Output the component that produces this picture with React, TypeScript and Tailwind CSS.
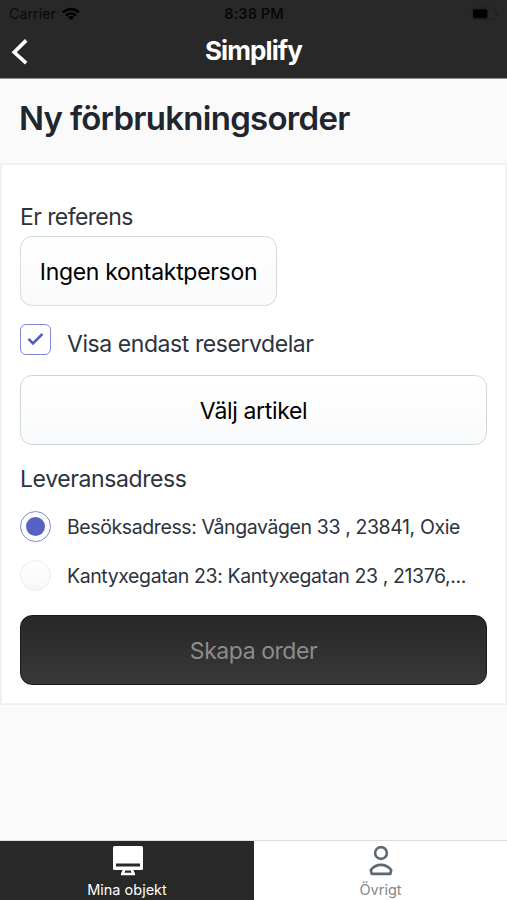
import { useState } from 'react';
import clsx from 'clsx';

const adresser = [
  { id: 'besok', text: 'Besöksadress: Vångavägen 33 , 23841, Oxie' },
  { id: 'kantyx', text: 'Kantyxegatan 23: Kantyxegatan 23 , 21376,...' },
];

function StatusBar() {
  return (
    <div className="flex h-[27px] items-center justify-between pr-[8px] pl-[9px] text-[14.5px] text-black/80">
      <div className="flex w-24 items-center gap-[6px]">
        <span className="tracking-[-0.1px]">Carrier</span>
        <svg width="18" height="14" viewBox="0 0 18 14" fill="none" stroke="#000" strokeWidth="2.7">
          <path d="M1 5.4C5.4 .9 12.6 .9 17 5.4" />
          <path d="M4 8.6c2.9-2.8 7.1-2.8 10 0" />
          <path d="M9 13.2 6 10.3c1.8-1.6 4.2-1.6 6 0z" fill="#000" stroke="none" />
        </svg>
      </div>
      <span className="font-semibold tracking-[0.1px]">8:38 PM</span>
      <div className="flex w-24 justify-end">
        <svg width="28" height="14" viewBox="0 0 28 14" fill="none">
          <rect x="1" y="1" width="24" height="11.5" rx="3" stroke="#202020" />
          <rect x="2" y="2.3" width="14.5" height="9" rx="2" fill="#000" />
          <path d="M26.4 5v4c1.4-.5 1.4-3.5 0-4z" fill="#1c1c1c" />
        </svg>
      </div>
    </div>
  );
}

export default function App() {
  const [reservdelar, setReservdelar] = useState(true);
  const [adress, setAdress] = useState('besok');

  return (
    <div className="flex h-[900px] w-[507px] flex-col overflow-hidden bg-[#fafafa] font-['Inter',sans-serif] text-[#2d333d]">
      <header className="h-[79px] shrink-0 border-b border-[#8a8a8a] bg-[#282828]">
        <StatusBar />
        <div className="flex h-[50px] items-center justify-between px-[11px]">
          <button className="w-10" aria-label="Tillbaka">
            <svg width="18" height="28" viewBox="0 0 18 28" fill="none" stroke="#fff" strokeWidth="3.6">
              <path d="M15.2 2.4 3.2 14.3 15.2 25.2" />
            </svg>
          </button>
          <h1 className="pb-[2px] text-[26px] leading-8 font-bold tracking-[-0.9px] text-white">Simplify</h1>
          <div className="w-10" />
        </div>
      </header>

      <h2 className="mt-[19px] ml-[19px] h-[65px] text-[33px] leading-10 font-semibold tracking-[-0.72px] whitespace-nowrap text-[#20252f]">
        Ny förbrukningsorder
      </h2>

      <main className="flex h-[542px] shrink-0 flex-col border-2 border-[#f1f1f1] bg-white px-[18px] pt-9">
        <p className="text-[23px] leading-8 tracking-[-0.6px]">Er referens</p>
        <button className="mt-[3px] h-[70px] w-[257px] shrink-0 rounded-xl border border-[#d4d9db] bg-linear-to-b from-white to-[#f9fafb] pt-[3px] text-[23px] tracking-[-0.3px] whitespace-nowrap text-black">
          Ingen kontaktperson
        </button>

        {/* Filter */}
        <label className="mt-[17px] flex h-8 items-center gap-4">
          <input type="checkbox" className="sr-only" checked={reservdelar} onChange={e => setReservdelar(e.target.checked)} />
          <span className="flex size-[31px] items-center justify-center rounded-[6px] border-[1.5px] border-[#7f88d2] bg-white">
            {reservdelar && (
              <svg width="17" height="14" viewBox="0 0 17 14" fill="none" stroke="#515bc4" strokeWidth="2.6">
                <path d="M1.5 6.8 6 11.3 15.5 1.8" />
              </svg>
            )}
          </span>
          <span className="pt-[9px] text-[23px] leading-8 tracking-[-0.43px] whitespace-nowrap">Visa endast reservdelar</span>
        </label>
        <button className="mt-[20px] h-[70px] shrink-0 rounded-xl border border-[#d0d7da] bg-linear-to-b from-white to-[#f9fafb] pt-[2px] text-[23px] tracking-[-0.35px] text-black">
          Välj artikel
        </button>

        <p className="mt-[18px] text-[23px] leading-8 tracking-[-0.4px]">Leveransadress</p>
        <div className="mt-[7px] flex flex-col">
          {adresser.map(a => (
            <label key={a.id} className="flex h-[49px] items-center gap-4">
              <input type="radio" name="adress" className="sr-only" checked={adress === a.id} onChange={() => setAdress(a.id)} />
              <span
                className={clsx(
                  'flex size-[31px] shrink-0 items-center justify-center rounded-full border',
                  adress === a.id ? 'border-[#7f88d8] bg-white' : 'border-[#ececec] bg-linear-to-b from-white to-[#f7f7f7]',
                )}
              >
                {adress === a.id && <span className="size-[19px] rounded-full bg-[#5862c3]" />}
              </span>
              <span className="text-[19.5px] leading-7 tracking-[-0.4px] whitespace-nowrap">{a.text}</span>
            </label>
          ))}
        </div>

        <button className="mt-[15px] h-[70px] shrink-0 rounded-xl border border-[#1b1b1b] bg-linear-to-b from-[#282828] to-[#383838] pt-[2px] text-[23px] tracking-[-0.45px] text-[#8c8c8c]">
          Skapa order
        </button>
      </main>

      <nav className="mt-auto flex h-[60px] shrink-0 border-t border-[#dedede] bg-white text-[14.5px]">
        <a className="flex w-[254px] flex-col items-center bg-[#282828] pt-[5px] text-white">
          <svg width="30" height="30" viewBox="0 0 30 30" className="ml-[2px]">
            <path
              fill="#fff"
              fillRule="evenodd"
              d="M1.5 0h27A1.5 1.5 0 0 1 30 1.5v21a1.5 1.5 0 0 1-1.5 1.5h-8.2l1.7 3.6v1.6H8v-1.6L9.7 24H1.5A1.5 1.5 0 0 1 0 22.5v-21A1.5 1.5 0 0 1 1.5 0zM3 17.6v2.9h24v-2.9zM12.2 24.6l-.7 2.1h7l-.7-2.1z"
            />
          </svg>
          <span className="mt-1 leading-5">Mina objekt</span>
        </a>
        <a className="flex flex-1 flex-col items-center pt-[5px] text-[#868686]">
          <svg width="24" height="30" viewBox="0 0 24 30" fill="none" stroke="#5b6873" strokeWidth="2.6" strokeLinejoin="round">
            <circle cx="12" cy="7" r="5.9" />
            <path d="M1.8 24C4.5 20.5 8 18.9 12 18.9S19.5 20.5 22.2 24L21.3 27.9H2.7z" />
          </svg>
          <span className="mt-1 leading-5">Övrigt</span>
        </a>
      </nav>
    </div>
  );
}
